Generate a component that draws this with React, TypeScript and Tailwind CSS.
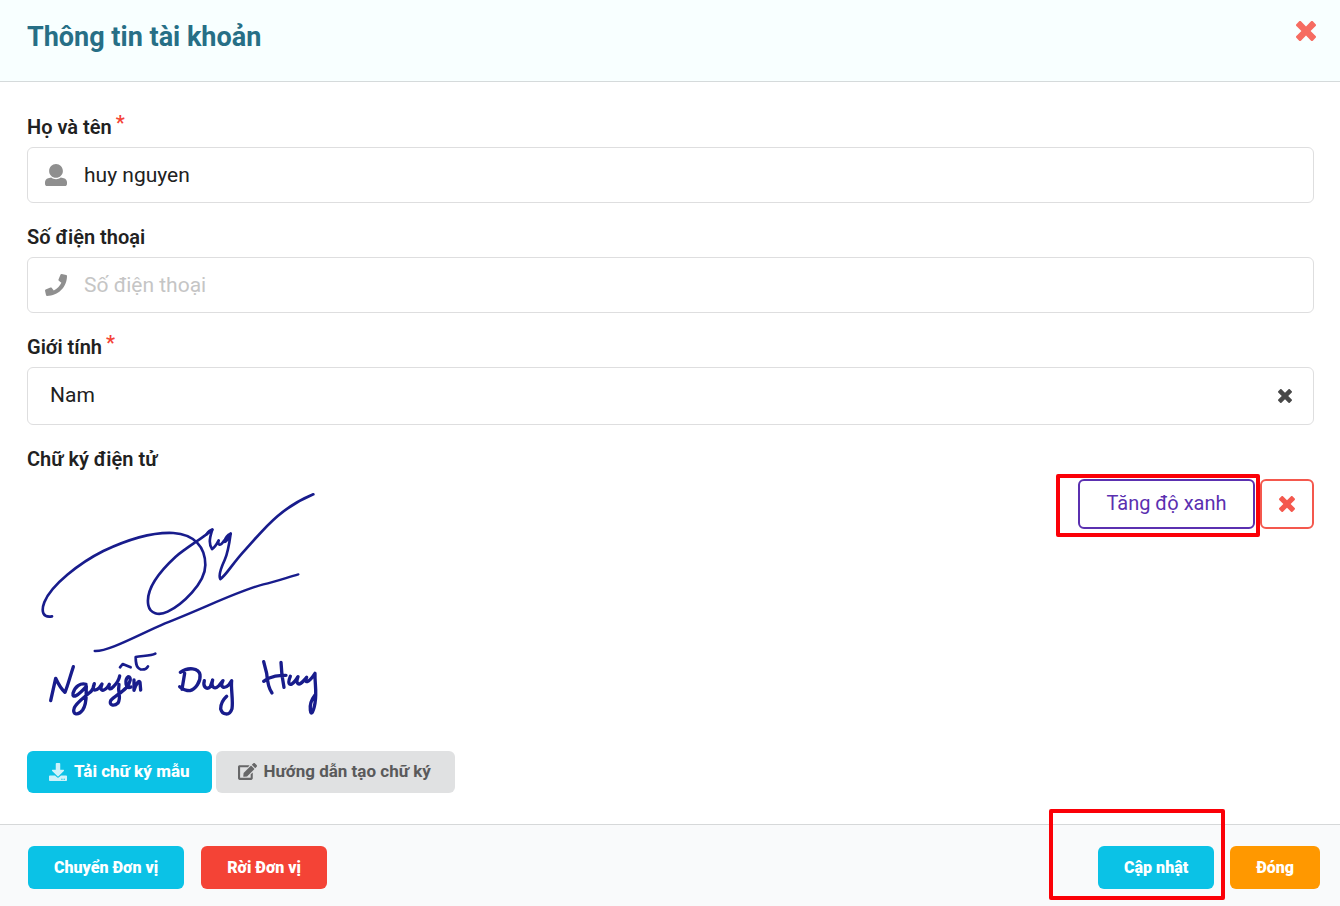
import { useState } from 'react';
import type { ReactNode } from 'react';
import { FaDownload, FaEdit, FaPhone } from 'react-icons/fa';

function CrossIcon({ className }: { className: string }) {
  return (
    <svg viewBox="0 0 384 384" fill="currentColor" aria-hidden="true" className={className}>
      <path
        transform="translate(0 -64)"
        d="M323.1 441l53.9-53.9c9.4-9.4 9.4-24.5 0-33.9L279.8 256l97.2-97.2c9.4-9.4 9.4-24.5 0-33.9L323.1 71c-9.4-9.4-24.5-9.4-33.9 0L192 168.2 94.8 71c-9.4-9.4-24.5-9.4-33.9 0L7 124.9c-9.4 9.4-9.4 24.5 0 33.9l97.2 97.2L7 353.2c-9.4 9.4-9.4 24.5 0 33.9L60.9 441c9.4 9.4 24.5 9.4 33.9 0l97.2-97.2 97.2 97.2c9.3 9.3 24.5 9.3 33.9 0z"
      />
    </svg>
  );
}

function UserIcon({ className }: { className: string }) {
  return (
    <svg viewBox="0 0 512 512" fill="currentColor" aria-hidden="true" className={className}>
      <path d="M256 0c88.366 0 160 71.634 160 160s-71.634 160-160 160S96 248.366 96 160 167.634 0 256 0zm183.283 333.821l-71.313-17.828c-74.923 53.89-165.738 41.864-223.94 0l-71.313 17.828C29.981 344.505 0 382.903 0 426.955V464c0 26.51 21.49 48 48 48h416c26.51 0 48-21.49 48-48v-37.045c0-44.052-29.981-82.45-72.717-93.134z" />
    </svg>
  );
}

function Signature() {
  return (
    <svg
      viewBox="0 0 900 740"
      role="img"
      aria-label="Chữ ký điện tử"
      fill="none"
      stroke="#181c8c"
      strokeLinecap="round"
      strokeLinejoin="round"
      className="w-[300px] shrink-0"
    >
      <g strokeWidth="8">
        <path d="M66 409C40 414 32 396 43 367C63 315 150 248 220 213C290 180 370 156 430 159C492 163 526 200 526 255C526 310 456 374 413 395C386 408 360 401 355 376C346 330 388 275 437 230C470 202 514 177 547 149C541 168 534 190 546 207C554 202 560 193 566 181C562 196 570 200 582 182C584 192 592 181 602 161C597 198 592 223 584 240C571 268 566 289 571 297C588 287 608 249 647 208C696 156 742 88 850 43" />
        <path d="M547 149C539 151 535 155 530 163M602 161C592 165 586 174 584 183" />
        <path d="M194 513C235 515 320 467 405 430C520 386 620 334 700 313C740 304 772 292 805 283" strokeWidth="7" />
      </g>
      <g strokeWidth="10">
        <path d="M62 662L77 595C84 610 96 630 105 637C114 615 120 590 130 560" />
        <path d="M168 613C151 608 135 620 129 640C126 658 145 646 169 619C167 646 173 667 158 690C144 708 127 704 132 686C136 670 158 656 180 637C190 630 191 620 193 611C186 628 191 638 208 623L216 612C209 631 216 638 232 622L238 613C234 627 240 632 251 619C260 610 267 599 269 588" />
        <path d="M267 613C262 639 275 652 264 669C252 680 236 676 242 662C252 650 272 640 288 624C303 608 304 590 295 590C284 598 285 630 303 621" />
        <path d="M312 600L312 631C316 616 327 597 330 607L332 630" />
        <path d="M270 562L278 552L302 562" strokeWidth="8" />
        <path d="M376 521C362 529 334 527 317 531C317 545 317 563 331 568C342 570 349 568 354 559" strokeWidth="8" />
        <path d="M464 580L456 628M451 577C475 560 506 564 510 584C513 605 496 628 480 632C466 632 456 626 449 620" />
        <path d="M523 602C518 620 529 631 541 620L548 600C542 622 554 630 567 617L579 602C569 623 582 628 597 614L605 602C602 626 610 660 606 686C598 710 577 704 572 687C572 670 578 660 590 649" />
        <path d="M701 545L710 580C712 605 716 625 726 639M753 547C754 575 758 603 762 622M701 604C725 586 748 586 768 586" />
        <path d="M781 589C771 613 780 622 796 602L804 590C796 612 806 620 821 602L830 592C821 611 835 611 855 580C854 610 861 635 855 670C851 693 843 710 841 690C839 675 845 658 855 645" />
      </g>
    </svg>
  );
}

function FieldLabel({ htmlFor, required, children }: { htmlFor: string; required?: boolean; children: ReactNode }) {
  return (
    <label htmlFor={htmlFor} className="mb-1.5 flex h-7 gap-1 text-xl leading-7 font-semibold">
      {children}
      {required && <span className="-mt-1 text-[#f44336]">*</span>}
    </label>
  );
}

const inputClass =
  'h-14 w-full rounded-md border border-[#dededf] bg-white pr-4 pl-14 text-[21px] text-[#212121] outline-none placeholder:text-[#c5c5c5] focus:border-[#85b7d9]';

const buttonClass = 'flex items-center justify-center rounded-md';
const solidButtonClass = 'h-[43px] px-[26px] text-base font-black text-white';

export default function App() {
  const [name, setName] = useState('huy nguyen');
  const [phone, setPhone] = useState('');
  const [gender, setGender] = useState('Nam');

  return (
    <form
      className="flex min-h-screen flex-col bg-white font-['Roboto','Noto_Sans',sans-serif] text-[#212121]"
      onSubmit={(event) => event.preventDefault()}
    >
      <header className="flex items-start justify-between border-b border-[#d5dadb] bg-[#f8ffff] pt-[19px] pr-6 pb-[26px] pl-[27px]">
        <h1 className="text-[27px] leading-9 font-bold text-[#276f86]">Thông tin tài khoản</h1>
        <button type="button" aria-label="Đóng cửa sổ" className="mt-0.5 text-[#f66c61]">
          <CrossIcon className="size-5" />
        </button>
      </header>

      <main className="flex grow flex-col gap-5 pt-[31px] pr-[26px] pb-[31px] pl-[27px]">
        <div>
          <FieldLabel htmlFor="name" required>Họ và tên</FieldLabel>
          <div className="relative">
            <UserIcon className="absolute top-[17px] left-[18px] size-[22px] text-[#8f8f8f]" />
            <input id="name" className={inputClass} value={name} onChange={(e) => setName(e.target.value)} />
          </div>
        </div>

        <div>
          <FieldLabel htmlFor="phone">Số điện thoại</FieldLabel>
          <div className="relative">
            <FaPhone className="absolute top-[17px] left-[18px] size-[22px] text-[#8f8f8f]" />
            <input
              id="phone"
              type="tel"
              placeholder="Số điện thoại"
              className={inputClass}
              value={phone}
              onChange={(e) => setPhone(e.target.value)}
            />
          </div>
        </div>

        <div>
          <FieldLabel htmlFor="gender" required>Giới tính</FieldLabel>
          <div className="flex h-[58px] items-center rounded-md border border-[#dededf] pr-[21px]">
            <select
              id="gender"
              className="h-full grow appearance-none bg-transparent pl-[22px] text-[21px] outline-none"
              value={gender}
              onChange={(e) => setGender(e.target.value)}
            >
              <option value=""></option>
              <option value="Nam">Nam</option>
              <option value="Nữ">Nữ</option>
            </select>
            <button type="button" aria-label="Xóa giới tính" className="text-[#484848]" onClick={() => setGender('')}>
              <CrossIcon className="size-[14px]" />
            </button>
          </div>
        </div>

        <section>
          <h2 className="mb-1.5 text-xl leading-7 font-semibold">Chữ ký điện tử</h2>
          <div className="flex items-start justify-between pl-[3px]">
            <div className="pt-px">
              <Signature />
            </div>
            <div className="flex gap-[5px]">
              <div className="relative">
                <button
                  type="button"
                  className="h-[50px] w-[177px] rounded-md border-2 border-[#5b30b0] pb-0.5 text-xl text-[#5b30b0]"
                >
                  Tăng độ xanh
                </button>
                <div className="pointer-events-none absolute -top-[5px] -right-[5px] -bottom-2 -left-[22px] rounded-xs border-4 border-[#fb0007]" />
              </div>
              <button
                type="button"
                aria-label="Xóa chữ ký"
                className="flex h-[50px] w-[54px] items-center justify-center rounded-md border-2 border-[#f4584d] text-[#f4584d]"
              >
                <CrossIcon className="size-4" />
              </button>
            </div>
          </div>
          <div className="mt-6 flex gap-1">
            <button type="button" className={`${buttonClass} h-[42px] gap-[7px] bg-[#0bc2e6] px-[22px] text-[17px] font-extrabold text-white`}>
              <FaDownload className="size-[18px] opacity-80" />
              Tải chữ ký mẫu
            </button>
            <button type="button" className={`${buttonClass} h-[42px] gap-[7px] bg-[#e0e1e2] pr-6 pl-[22px] text-[17px] font-bold text-[#5a5a5b]`}>
              <FaEdit className="size-[19px] opacity-90" />
              Hướng dẫn tạo chữ ký
            </button>
          </div>
        </section>
      </main>

      <footer className="flex items-center justify-between border-t border-[#d6d8d9] bg-[#f9fafb] pt-[21px] pr-5 pb-[17px] pl-7">
        <div className="flex gap-[17px]">
          <button type="button" className={`${buttonClass} ${solidButtonClass} bg-[#0bc2e6]`}>Chuyển Đơn vị</button>
          <button type="button" className={`${buttonClass} ${solidButtonClass} bg-[#f44336]`}>Rời Đơn vị</button>
        </div>
        <div className="flex gap-4">
          <div className="relative">
            <button type="submit" className={`${buttonClass} ${solidButtonClass} bg-[#0bc2e6]`}>Cập nhật</button>
            <div className="pointer-events-none absolute -top-[37px] -right-[11px] -bottom-[11px] -left-[49px] rounded-xs border-4 border-[#fb0007]" />
          </div>
          <button type="button" className={`${buttonClass} ${solidButtonClass} bg-[#ff9800]`}>Đóng</button>
        </div>
      </footer>
    </form>
  );
}
